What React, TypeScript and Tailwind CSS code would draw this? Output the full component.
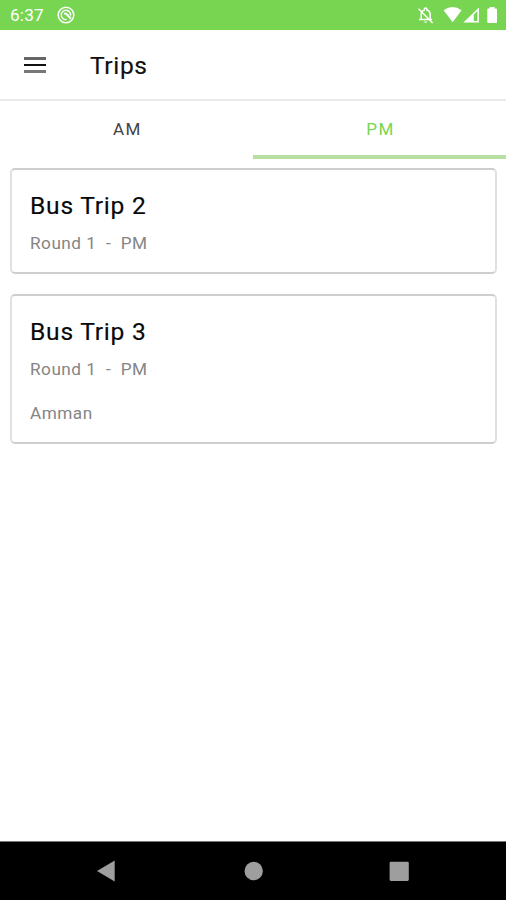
import React from "react";

type Trip = { name: string; round: string; place?: string };

const trips: Trip[] = [
  { name: "Bus Trip 2", round: "Round 1  -  PM" },
  { name: "Bus Trip 3", round: "Round 1  -  PM", place: "Amman" },
];

function StatusBar() {
  return (
    <div className="flex h-[30px] shrink-0 items-center bg-[#78d552] text-white">
      <span className="ml-[10px] w-[47px] whitespace-nowrap pt-[2px] text-[17.2px] leading-none tracking-[0.2px]">6:37</span>
      <svg width="18" height="18" viewBox="0 0 18 18" fill="none" stroke="currentColor">
        <circle cx="9" cy="9" r="7.8" strokeWidth="1.5" />
        <path d="M9.6 13.6A4.7 4.7 0 1 1 13.6 9.6" strokeWidth="1.4" />
        <path d="M7 7.8Q9 6.8 10.2 8.8L14 12.7" strokeWidth="2" />
      </svg>
      <svg width="90" height="30" viewBox="416 0 90 30" className="ml-auto" fill="currentColor">
        <path d="M421.2 19.9V14.5C421.2 12 422.4 10.4 424.4 9.9V8.8Q425.6 7.4 426.8 8.8V9.9C428.8 10.4 430.2 12 430.2 14.5V19.9" fill="none" stroke="currentColor" strokeWidth="1.5" />
        <path d="M419 19.6H432M418.6 8.8L432.6 23" fill="none" stroke="currentColor" strokeWidth="1.5" />
        <path d="M423.8 21.5H427.4Q425.6 24.2 423.8 21.5Z" />
        <path d="M443.6 10.3Q452.5 3.8 461.6 10.3L452.6 22.2Z" />
        <path fillRule="evenodd" d="M463.4 22.4L478.9 7.4V22.4ZM473.8 20.9H477.4V11L473.8 14.4Z" />
        <path d="M487.3 9.4Q487.3 8.6 488.1 8.6H489.7V6.9H494.6V8.6H496.2Q497 8.6 497 9.4V22.2Q497 23 496.2 23H488.1Q487.3 23 487.3 22.2Z" />
      </svg>
    </div>
  );
}

function TripCard({ trip }: { trip: Trip }) {
  return (
    <article
      className={`rounded-[5px] border-2 border-x-[#e0e0e0] border-y-[#cecece] pl-[18px] pt-[21px] ${
        trip.place ? "h-[150px]" : "h-[106px]"
      }`}
    >
      <h2 className="text-[24.6px] leading-[30px] tracking-[0.75px] text-[#080808] [-webkit-text-stroke:0.15px]">{trip.name}</h2>
      <p className="mt-[12px] whitespace-pre text-[17.2px] leading-[20px] tracking-[0.5px] text-[#858585]">{trip.round}</p>
      {trip.place && <p className="mt-[24px] text-[17.2px] leading-[20px] tracking-[0.5px] text-[#858585]">{trip.place}</p>}
    </article>
  );
}

export default function App() {
  return (
    <div className="flex h-[900px] w-[506px] flex-col overflow-hidden bg-white font-['Roboto',sans-serif]">
      <StatusBar />
      <header className="flex h-[71px] shrink-0 items-center border-b-2 border-[#e9e9e9]">
        <button aria-label="Menu" className="ml-[24px] flex w-[22px] flex-col gap-[4px]">
          <span className="h-[3px] bg-[#666]" />
          <span className="h-[2px] bg-[#111]" />
          <span className="h-[3px] bg-[#777]" />
        </button>
        <h1 className="ml-[44px] mt-[4px] text-[24.6px] leading-none tracking-[0.6px] text-[#111] [-webkit-text-stroke:0.15px]">Trips</h1>
      </header>
      <nav className="grid h-[58px] shrink-0 grid-cols-2 text-center text-[17px] leading-[20px] tracking-[1.5px]">
        <button className="pb-[3px] pl-[2px] text-[#444]">AM</button>
        <button className="border-b-4 border-[#b8dfa2] pl-[2px] pt-px text-[#78d552]">PM</button>
      </nav>
      <main className="flex min-h-0 flex-1 flex-col gap-[20px] pl-[10px] pr-[9px] pt-[9px]">
        {trips.map((trip) => (
          <TripCard key={trip.name} trip={trip} />
        ))}
      </main>
      <footer className="h-[59px] shrink-0 border-t border-[#777] bg-black">
        <svg width="506" height="58" viewBox="0 842 506 58" fill="#9e9e9e">
          <path d="M97 871L114.7 860.5V881.5Z" />
          <circle cx="253.7" cy="871" r="9.2" />
          <rect x="389.6" y="861.7" width="19.2" height="19.2" rx="1.3" />
        </svg>
      </footer>
    </div>
  );
}
